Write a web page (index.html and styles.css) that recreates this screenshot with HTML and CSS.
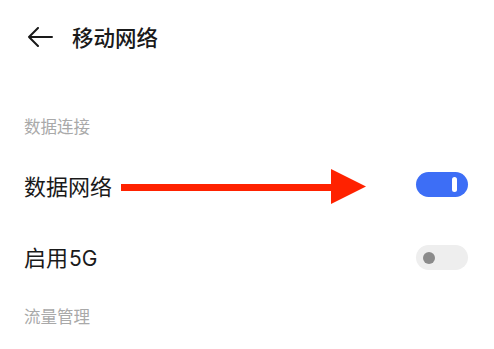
FILE: index.html
```html
<!DOCTYPE html>
<html lang="zh">
<head>
<meta charset="utf-8">
<link rel="stylesheet" href="styles.css">
</head>
<body>
<div class="page">
  <header class="topbar">
    <svg class="back" width="26" height="20" viewBox="0 0 26 20">
      <path d="M25 10H2M11 1L2 10L11 19" fill="none" stroke="#1a1a1a" stroke-width="2" stroke-linecap="round" stroke-linejoin="round"/>
    </svg>
    <h1 class="title">移动网络</h1>
  </header>
  <div class="section-label first">数据连接</div>
  <div class="row">
    <span class="row-label">数据网络</span>
    <svg class="annot" width="250" height="36" viewBox="0 0 250 36">
      <rect x="0" y="15" width="214" height="7" fill="#ff2200"/>
      <polygon points="210,0 245,17.5 210,35" fill="#ff2200"/>
    </svg>
    <div class="switch on"><span class="knob-bar"></span></div>
  </div>
  <div class="row">
    <span class="row-label">启用<span class="latin">5G</span></span>
    <div class="switch off"><span class="knob-dot"></span></div>
  </div>
  <div class="section-label second">流量管理</div>
</div>
</body>
</html>
```
FILE: styles.css
```css
html, body {
  margin: 0;
  padding: 0;
  background: #ffffff;
}
.page {
  width: 494px;
  height: 349px;
  overflow: hidden;
  box-sizing: border-box;
  padding: 0 26px 0 24px;
  font-family: "Noto Sans CJK SC", "Noto Sans", sans-serif;
  color: #1a1a1a;
}
.topbar {
  height: 74px;
  display: flex;
  align-items: center;
  gap: 19px;
  padding-left: 3px;
}
.back {
  display: block;
  flex: none;
}
.title {
  margin: 0;
  font-size: 21.5px;
  font-weight: 500;
  line-height: 24px;
}
.section-label {
  height: 24px;
  line-height: 24px;
  font-size: 16.5px;
  color: #a9a9a9;
}
.section-label.first {
  margin-top: 40px;
  margin-bottom: 10px;
}
.section-label.second {
  margin-top: 10px;
}
.row {
  position: relative;
  height: 73px;
  display: flex;
  align-items: center;
  justify-content: space-between;
}
.row-label {
  font-size: 22px;
  line-height: 26px;
  color: #1a1a1a;
}
.latin {
  font-family: Inter, "Noto Sans", sans-serif;
  font-size: 21px;
  margin-left: 1px;
}
.annot {
  position: absolute;
  left: 97px;
  top: 21px;
}
.switch {
  width: 52px;
  height: 25px;
  border-radius: 13px;
  position: relative;
  display: flex;
  align-items: center;
  box-sizing: border-box;
}
.switch.on {
  background: #3d6ef6;
  justify-content: flex-end;
  padding-right: 11px;
}
.switch.off {
  background: #eeeeee;
  padding-left: 7px;
}
.knob-bar {
  width: 5px;
  height: 15px;
  border-radius: 3px;
  background: #ffffff;
}
.knob-dot {
  width: 12px;
  height: 12px;
  border-radius: 50%;
  background: #8b8b8b;
}
```
